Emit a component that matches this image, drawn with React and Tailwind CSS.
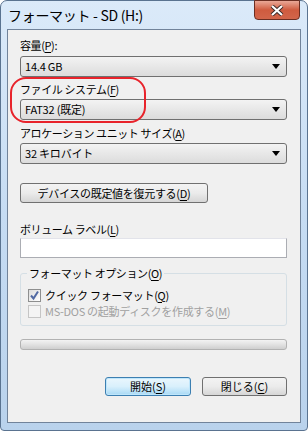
import React from 'react'

const font = "font-['Noto_Sans_CJK_JP','Liberation_Sans',sans-serif]"

const Key = ({ k }) => (
  <>
    (<span className="underline underline-offset-2">{k}</span>)
  </>
)

const Combo = ({ value }) => (
  <div className="flex items-center justify-between h-[21px] w-[267px] px-[4px] rounded-[3px] border border-[#707070] bg-gradient-to-b from-[#f3f3f3] to-[#dcdcdc] text-[11px] tracking-[-0.2px] leading-none text-black">
    <span>{value}</span>
    <svg width="8" height="5" viewBox="0 0 8 5" className="mr-[2px]">
      <path d="M0 0 H8 L4 5 Z" fill="#000" />
    </svg>
  </div>
)

const Label = ({ children, className = '' }) => (
  <div className={`h-[16px] leading-[16px] text-[11px] tracking-[-0.4px] text-black ${className}`}>{children}</div>
)

const Check = ({ checked, disabled, children }) => (
  <div className="flex items-center gap-[4px] h-[14px]">
    <div
      className={`w-[13px] h-[13px] border flex items-center justify-center ${
        disabled
          ? 'border-[#c5c5c5] bg-[#f4f4f4]'
          : 'border-[#8e8f8f] bg-gradient-to-br from-[#dcdcdc] to-[#ffffff]'
      }`}
    >
      {checked && (
        <svg width="11" height="11" viewBox="0 0 11 11">
          <path d="M2 5.5 L4.5 8.5 L9 1.5" stroke="#5169a3" strokeWidth="2" fill="none" />
        </svg>
      )}
    </div>
    <span className={`text-[11px] tracking-[-0.3px] leading-none ${disabled ? 'text-[#a0a0a0]' : 'text-black'}`}>
      {children}
    </span>
  </div>
)

export default function App() {
  return (
    <div className={`${font} w-[308px] h-[431px] bg-white`}>
      <div className="relative w-[308px] h-[431px] rounded-t-[7px] rounded-b-[4px] border border-[#5a7390] bg-gradient-to-b from-[#dbeaf9] via-[#c6dcf3] to-[#b9d2ec] flex flex-col">
        {/* Title bar */}
        <div className="h-[28px] flex items-center pl-[7px] text-[14px] tracking-[-0.3px] text-black">
          フォーマット - SD (H:)
        </div>

        {/* Close button */}
        <div className="absolute top-[-1px] right-[7px] w-[46px] h-[20px] rounded-b-[4px] border border-[#6b2e22] bg-gradient-to-b from-[#e9a897] via-[#cf5b3f] to-[#d2654a] flex items-center justify-center">
          <svg width="14" height="11" viewBox="0 0 14 11">
            <path d="M2 1 L12 10 M12 1 L2 10" stroke="#3a2a28" strokeWidth="4" />
            <path d="M2 1 L12 10 M12 1 L2 10" stroke="#fff" strokeWidth="2.2" />
          </svg>
        </div>

        {/* Client area */}
        <div className="relative mx-[6px] mb-[7px] flex-1 border border-[#71839a] bg-[#f0f0f0] pl-[12px] pt-[7px]">
          <Label>容量<Key k="P" />:</Label>
          <div className="mt-[3px]">
            <Combo value="14.4 GB" />
          </div>

          <Label className="mt-[4px]">ファイル システム<Key k="F" /></Label>
          <div className="mt-[2px]">
            <Combo value="FAT32 (既定)" />
          </div>

          <Label className="mt-[5px]">アロケーション ユニット サイズ<Key k="A" /></Label>
          <div className="mt-[2px]">
            <Combo value="32 キロバイト" />
          </div>

          <div className="mt-[19px] w-[188px] h-[20px] rounded-[3px] border border-[#707070] bg-gradient-to-b from-[#f3f3f3] via-[#ebebeb] to-[#d6d6d6] flex items-center justify-center text-[11px] tracking-[-0.3px] leading-none text-black">
            デバイスの既定値を復元する<Key k="D" />
          </div>

          <Label className="mt-[18px]">ボリューム ラベル<Key k="L" /></Label>
          <div className="mt-[1px] w-[267px] h-[20px] border border-[#abadb3] border-t-[#e2e3ea] bg-white" />

          {/* Group box */}
          <div className="relative mt-[15px] w-[267px] h-[53px] border border-[#d5dfe5] rounded-[3px] pt-[14px] pl-[7px]">
            <div className="absolute -top-[9px] left-[6px] px-[2px] bg-[#f0f0f0] text-[11px] tracking-[-0.4px] leading-[16px] text-black">
              フォーマット オプション<Key k="O" />
            </div>
            <Check checked>クイック フォーマット<Key k="Q" /></Check>
            <div className="mt-[2px]">
              <Check disabled>MS-DOS の起動ディスクを作成する<Key k="M" /></Check>
            </div>
          </div>

          {/* Progress bar */}
          <div className="mt-[13px] w-[267px] h-[11px] rounded-[3px] border border-[#b2b2b2] bg-gradient-to-b from-[#f3f3f3] via-[#e2e2e2] to-[#cfcfcf]" />

          {/* Buttons */}
          <div className="mt-[27px] flex justify-end gap-[11px] w-[267px]">
            <div className="w-[86px] h-[19px] rounded-[3px] border border-[#3c7fb1] bg-gradient-to-b from-[#eaf6fd] via-[#d9f0fc] to-[#a7d9f5] shadow-[inset_0_0_0_1px_#bfe6fb] flex items-center justify-center text-[11px] leading-none text-black">
              開始<Key k="S" />
            </div>
            <div className="w-[85px] h-[19px] rounded-[3px] border border-[#707070] bg-gradient-to-b from-[#f3f3f3] via-[#ebebeb] to-[#d6d6d6] flex items-center justify-center text-[11px] leading-none text-black">
              閉じる<Key k="C" />
            </div>
          </div>

          {/* Red highlight */}
          <div className="absolute left-[2px] top-[47px] w-[136px] h-[46px] rounded-[16px] border-2 border-[#e8232b]" />
        </div>
      </div>
    </div>
  )
}
